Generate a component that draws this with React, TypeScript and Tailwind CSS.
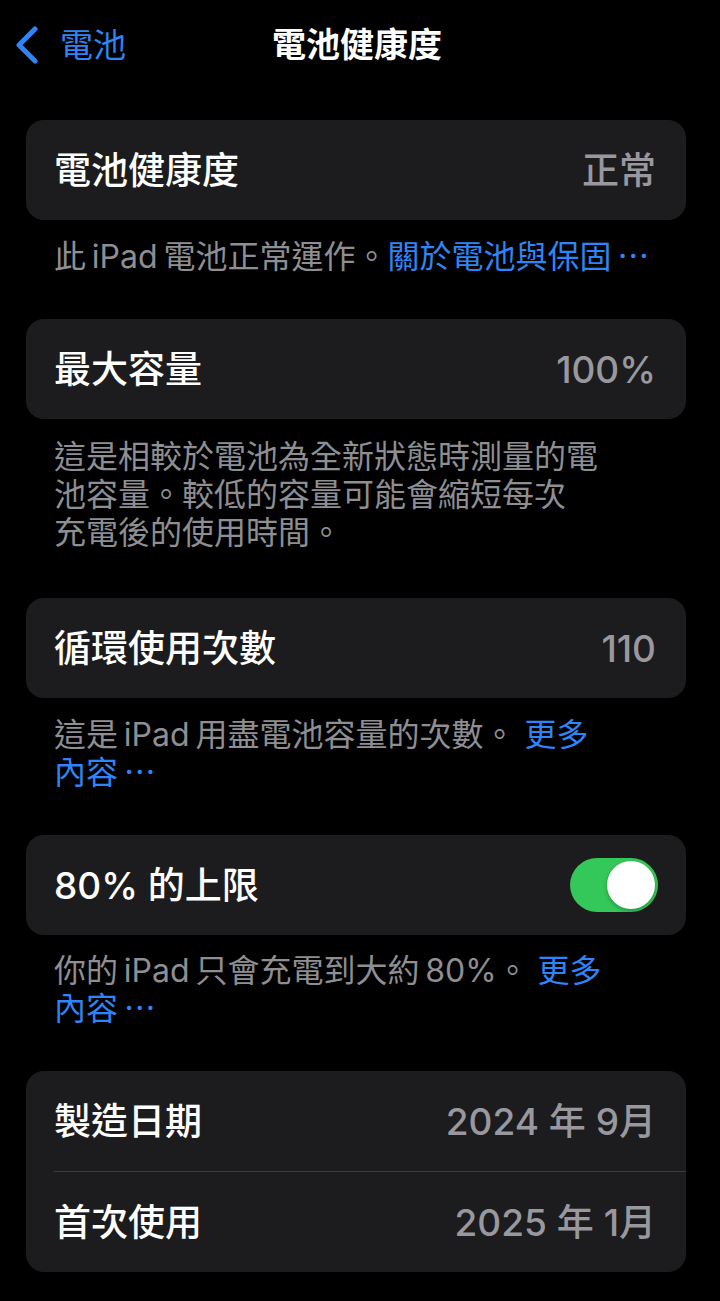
import React from "react";

const font = "font-['Inter','Noto_Sans_CJK_TC',sans-serif]";

const Row = ({ label, value, children }: { label: string; value?: string; children?: React.ReactNode }) => (
  <div className="flex h-[100px] items-center justify-between pl-[28px] pr-[30px]">
    <span className="text-[37px] font-medium leading-none text-white">{label}</span>
    {value && <span className="text-[37px] font-medium leading-none text-[#98989e]">{value}</span>}
    {children}
  </div>
);

const Card = ({ children }: { children: React.ReactNode }) => (
  <div className="overflow-hidden rounded-[18px] bg-[#1c1c1e]">{children}</div>
);

const Footer = ({ children, top, bottom }: { children: React.ReactNode; top: string; bottom: string }) => (
  <div className={`${top} ${bottom} pl-[28px] text-[32px] leading-[38px] text-[#8e8e93] whitespace-nowrap`}>
    {children}
  </div>
);

const Link = ({ children }: { children: React.ReactNode }) => (
  <span className="text-[#2f85f5]">{children}</span>
);

const Toggle = () => (
  <div className="-mr-[2px] flex h-[54px] w-[88px] items-center justify-end rounded-full bg-[#34c759] px-[3px]">
    <div className="h-[48px] w-[48px] rounded-full bg-white shadow-[0_2px_4px_rgba(0,0,0,0.25)]" />
  </div>
);

export default function App() {
  return (
    <div className={`min-h-[1301px] w-[720px] bg-black ${font}`}>
      {/* nav bar */}
      <div className="relative flex h-[90px] items-center">
        <div className="flex items-center gap-[20px] pl-[14px] text-[#2f85f5]">
          <svg width="26" height="38" viewBox="0 0 26 38" fill="none">
            <path d="M21 3 L5 19 L21 35" stroke="#2f85f5" strokeWidth="5" strokeLinecap="round" strokeLinejoin="round" />
          </svg>
          <span className="text-[33px] leading-none">電池</span>
        </div>
        <div className="absolute left-[272px] text-[34px] font-bold leading-none text-white">電池健康度</div>
      </div>

      <div className="pl-[26px] pr-[34px] pt-[30px]">
        <Card>
          <Row label="電池健康度" value="正常" />
        </Card>
        <Footer top="pt-[18px]" bottom="pb-[43px]">
          此&thinsp;iPad&thinsp;電池正常運作。<Link>關於電池與保固&thinsp;⋯</Link>
        </Footer>

        <Card>
          <Row label="最大容量" value="100%" />
        </Card>
        <Footer top="pt-[19px]" bottom="pb-[46px]">
          這是相較於電池為全新狀態時測量的電
          <br />
          池容量。較低的容量可能會縮短每次
          <br />
          充電後的使用時間。
        </Footer>

        <Card>
          <Row label="循環使用次數" value="110" />
        </Card>
        <Footer top="pt-[18px]" bottom="pb-[43px]">
          這是&thinsp;iPad&thinsp;用盡電池容量的次數。 <Link>更多</Link>
          <br />
          <Link>內容&thinsp;⋯</Link>
        </Footer>

        <Card>
          <Row label="80% 的上限">
            <Toggle />
          </Row>
        </Card>
        <Footer top="pt-[17px]" bottom="pb-[43px]">
          你的&thinsp;iPad&thinsp;只會充電到大約&thinsp;80%。 <Link>更多</Link>
          <br />
          <Link>內容&thinsp;⋯</Link>
        </Footer>

        <Card>
          <Row label="製造日期" value="2024 年 9月" />
          <div className="ml-[28px] h-px bg-[#3a3a3c]" />
          <Row label="首次使用" value="2025 年 1月" />
        </Card>
      </div>
    </div>
  );
}
